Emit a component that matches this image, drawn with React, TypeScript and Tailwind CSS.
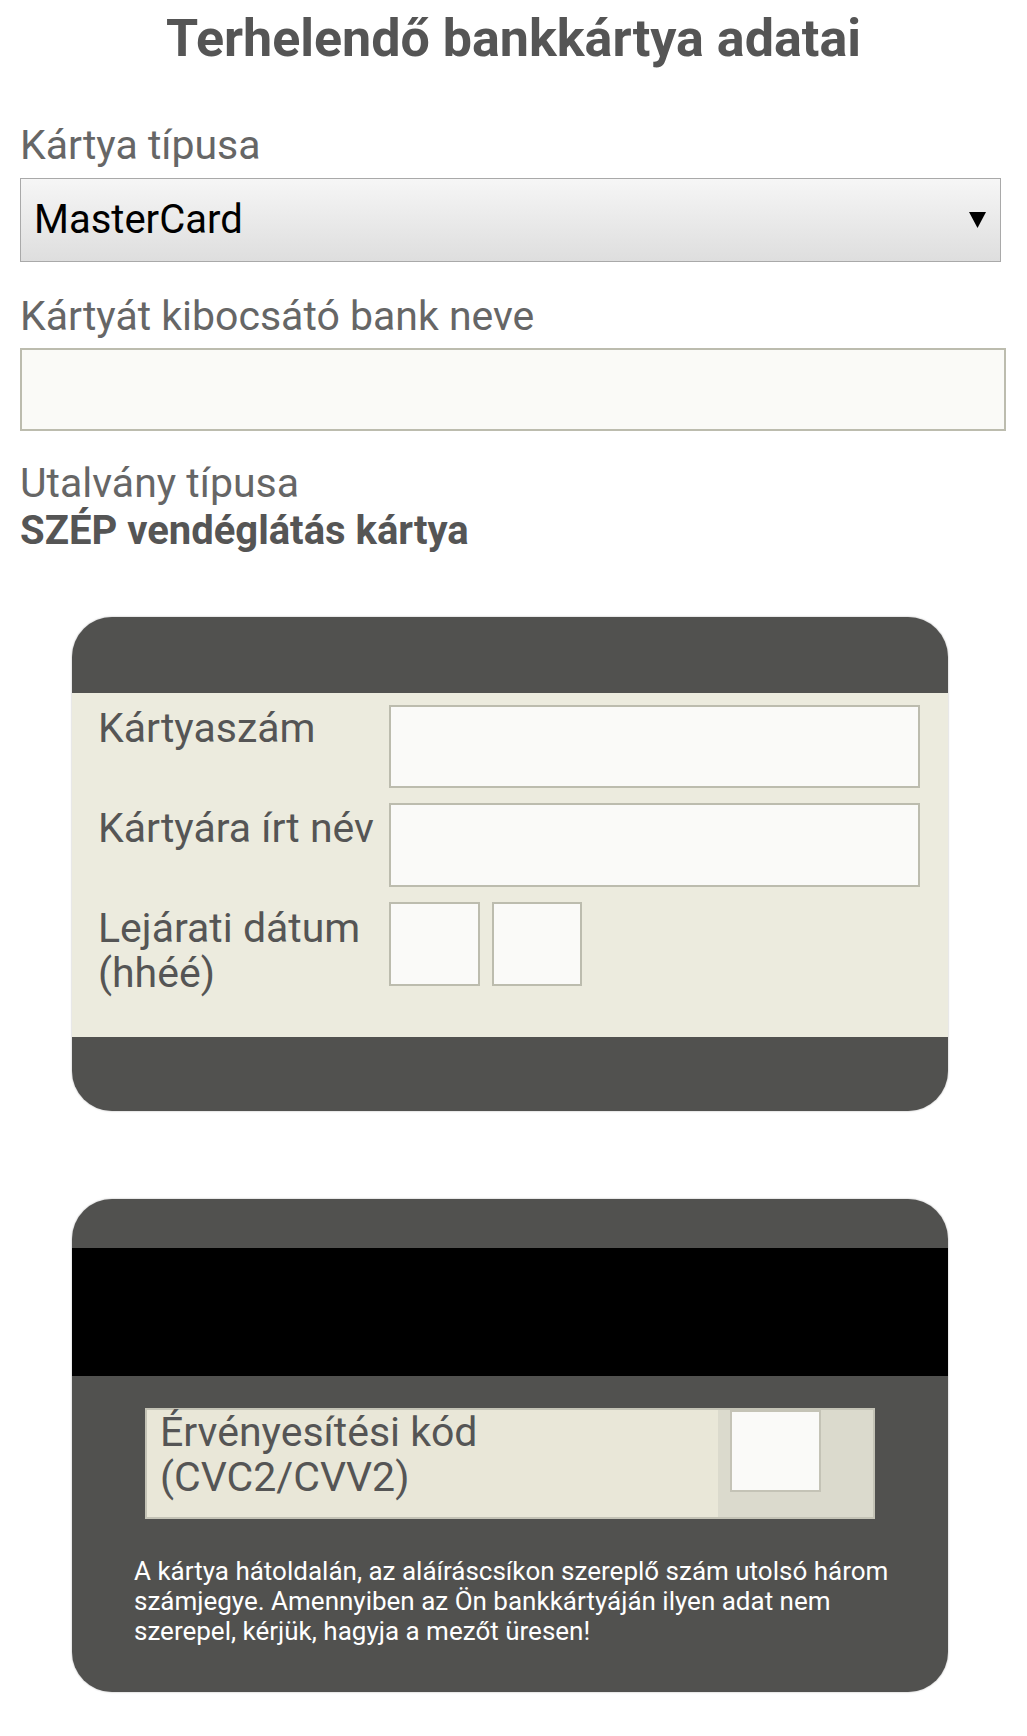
import { useState } from "react";

const font = { fontFamily: "Roboto, 'Noto Sans', sans-serif" };

export default function App() {
    const [bank, setBank] = useState("");

    return (
        <div className="bg-white w-[1027px] min-h-[1736px] text-[#555555]" style={font}>
            <div className="px-5 pt-[9px]">
                <h1 className="text-center text-[52px] leading-[60px] font-bold text-[#555555]">
                    Terhelendő bankkártya adatai
                </h1>

                {/* Card type */}
                <p className="mt-[53px] text-[41px] leading-[47px] text-[#666666]">Kártya típusa</p>
                <div className="mt-[9px] w-[981px] h-[84px] border border-[#a9a9a9] bg-gradient-to-b from-[#f6f6f6] to-[#dedede] flex items-center justify-between pl-[13px] pr-[14px]">
                    <span className="text-[40px] text-black">MasterCard</span>
                    <svg width="17" height="16" viewBox="0 0 17 16">
                        <path d="M0 0 L17 0 L8.5 16 Z" fill="#000" />
                    </svg>
                </div>

                {/* Bank name */}
                <p className="mt-[31px] text-[41px] leading-[47px] text-[#666666]">Kártyát kibocsátó bank neve</p>
                <input
                    value={bank}
                    onChange={(e) => setBank(e.target.value)}
                    className="mt-[8px] block w-[986px] h-[83px] border-2 border-[#bcbcae] bg-[#fafaf7] outline-none"
                />

                {/* Voucher type */}
                <p className="mt-[32px] text-[41px] leading-[40px] text-[#666666]">Utalvány típusa</p>
                <p className="mt-[8px] text-[40px] leading-[40px] font-bold text-[#555555]">SZÉP vendéglátás kártya</p>
            </div>

            {/* Card front */}
            <div className="mt-[66px] ml-[72px] w-[876px] rounded-[40px] overflow-hidden bg-[#51514f] shadow-[0_0_2px_rgba(0,0,0,0.35)]">
                <div className="h-[76px]" />
                <div className="h-[344px] bg-[#ecebde] pt-[12px] pl-[26px] pr-[28px] flex flex-col gap-[15px]">
                    <div className="flex h-[83px]">
                        <span className="w-[291px] pt-[1px] text-[41px] leading-[45px]">Kártyaszám</span>
                        <div className="flex-1 h-[83px] border-2 border-[#bcbcae] bg-[#fafaf8]" />
                    </div>
                    <div className="flex h-[84px]">
                        <span className="w-[291px] pt-[3px] text-[41px] leading-[45px]">Kártyára írt név</span>
                        <div className="flex-1 h-[84px] border-2 border-[#bcbcae] bg-[#fafaf8]" />
                    </div>
                    <div className="flex h-[84px]">
                        <span className="w-[291px] pt-[4px] text-[41px] leading-[45px]">
                            Lejárati dátum
                            <br />
                            (hhéé)
                        </span>
                        <div className="flex gap-[12px]">
                            <div className="w-[91px] h-[84px] border-2 border-[#bcbcae] bg-[#fafaf8]" />
                            <div className="w-[90px] h-[84px] border-2 border-[#bcbcae] bg-[#fafaf8]" />
                        </div>
                    </div>
                </div>
                <div className="h-[74px]" />
            </div>

            {/* Card back */}
            <div className="mt-[88px] ml-[72px] w-[876px] rounded-[40px] overflow-hidden bg-[#51514f] shadow-[0_0_2px_rgba(0,0,0,0.35)] pb-[46px]">
                <div className="h-[49px]" />
                <div className="h-[128px] bg-black" />
                <div className="mt-[32px] mx-[73px] h-[111px] border-2 border-[#c4c3b6] flex">
                    <div className="flex-1 bg-[#e9e7d8] pl-[13px] text-[41px] leading-[45px]">
                        Érvényesítési kód
                        <br />
                        (CVC2/CVV2)
                    </div>
                    <div className="w-[155px] bg-[#dbdacd] pl-[12px]">
                        <div className="w-[91px] h-[82px] border-2 border-[#c4c3b6] bg-[#fafaf8]" />
                    </div>
                </div>
                <p className="mt-[37px] pl-[62px] pr-[58px] text-[26px] leading-[30px] text-white">
                    A kártya hátoldalán, az aláíráscsíkon szereplő szám utolsó három számjegye. Amennyiben az Ön
                    bankkártyáján ilyen adat nem szerepel, kérjük, hagyja a mezőt üresen!
                </p>
            </div>
        </div>
    );
}
